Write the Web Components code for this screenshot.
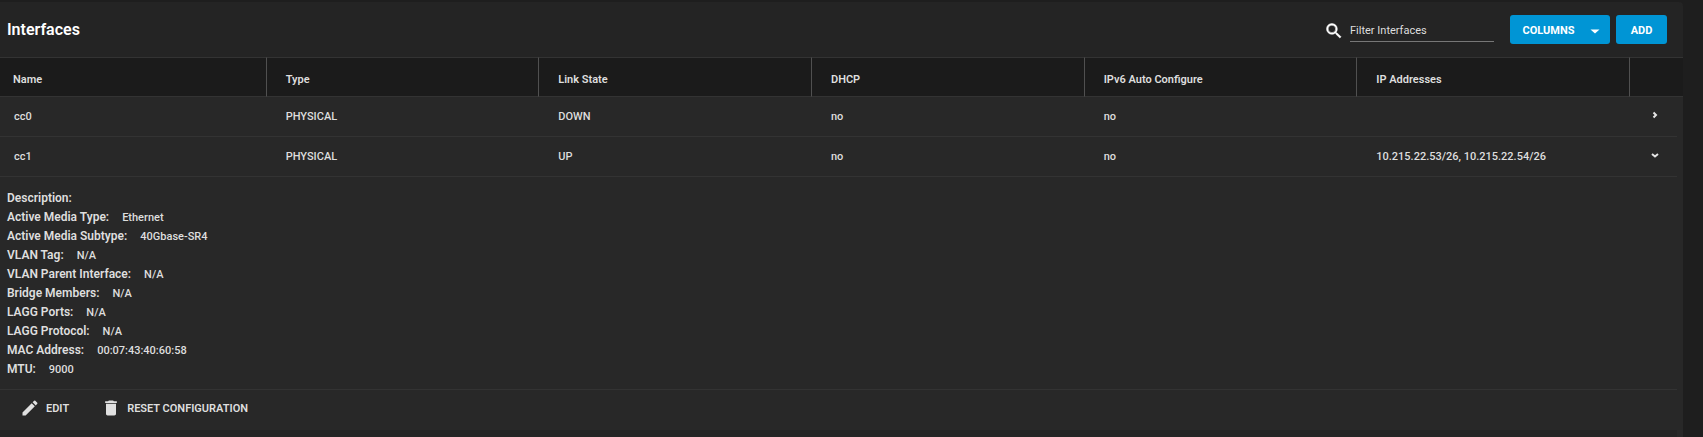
<!DOCTYPE html>
<html lang="en">
<head>
<meta charset="utf-8">
<title>Interfaces</title>
<style>
  html { background: #1e1e1e; }
  body {
    margin: 0;
    padding: 2px 20px 0 0;
    min-height: 100vh;
    box-sizing: border-box;
    display: flex;
    font-family: Roboto, "Liberation Sans", sans-serif;
    font-size: 11px;
    color: #dedede;
    --accent: #0095d5;
    --line: #333333;
    --row: #282828;
    --panel: #242424;
  }
</style>
</head>
<body>
<entity-card heading="Interfaces">
  <filter-box slot="tools"></filter-box>
  <accent-button slot="tools" menu>COLUMNS</accent-button>
  <accent-button slot="tools">ADD</accent-button>
  <interface-table></interface-table>
</entity-card>

<script>
const define = (name, html, setup) => {
  const template = document.createElement('template');
  template.innerHTML = html;
  customElements.define(name, class extends HTMLElement {
    constructor() {
      super();
      this.attachShadow({ mode: 'open' }).append(template.content.cloneNode(true));
    }
    connectedCallback() {
      if (setup && !this.ready) { this.ready = true; setup(this, this.shadowRoot); }
    }
  });
};

define('entity-card', `
  <style>
    :host { display: block; flex: 1; min-width: 0; background: var(--panel); border-radius: 0 4px 0 0; overflow: hidden; }
    header { display: flex; align-items: center; gap: 6px; height: 55px; padding: 0 16px 0 7px; box-sizing: border-box; }
    h1 { flex: 1; margin: 0; font-size: 16px; line-height: 20px; font-weight: 600; color: #fff; }
  </style>
  <header><h1></h1><slot name="tools"></slot></header>
  <slot></slot>`,
  (el, root) => { root.querySelector('h1').textContent = el.getAttribute('heading'); });

define('filter-box', `
  <style>
    :host { display: block; margin-right: 10px; }
    label { display: flex; align-items: center; gap: 6px; padding-top: 3px; }
    svg { width: 20px; height: 20px; fill: #fff; }
    input { width: 144px; height: 22px; box-sizing: border-box; padding: 0; border: 0; border-bottom: 1px solid #777; background: none; color: #dedede; font: inherit; outline: 0; }
    input::placeholder { color: #dedede; opacity: 1; }
  </style>
  <label>
    <svg viewBox="0 0 24 24" aria-hidden="true"><path d="M15.5 14h-.79l-.28-.27A6.47 6.47 0 0 0 16 9.5 6.5 6.5 0 1 0 9.5 16c1.61 0 3.09-.59 4.23-1.57l.27.28v.79l5 4.99L20.49 19l-4.99-5zm-6 0a4.5 4.5 0 1 1 0-9 4.5 4.5 0 0 1 0 9z" stroke="#fff" stroke-width=".6"/></svg>
    <input type="text" placeholder="Filter Interfaces" aria-label="Filter Interfaces">
  </label>`);

define('accent-button', `
  <style>
    :host { display: block; }
    button { display: flex; align-items: center; justify-content: center; gap: 9px; height: 29px; min-width: 51px; padding: 2px 12px 0; border: 0; border-radius: 3px; background: var(--accent); color: #fff; font: inherit; font-weight: 700; }
    svg { display: none; width: 24px; height: 24px; margin-right: -10px; fill: #fff; }
    :host([menu]) svg { display: block; }
    :host([menu]) button { min-width: 100px; }
  </style>
  <button type="button"><slot></slot><svg viewBox="0 0 24 24" aria-hidden="true"><path d="M7.500 10.500l4.500 4 4.500-4z"/></svg></button>`);

define('detail-line', `
  <style>
    :host { display: flex; align-items: baseline; gap: 13px; height: 19px; line-height: 19px; }
    strong { font-size: 12px; font-weight: 600; }
  </style>
  <strong></strong><span><slot></slot></span>`,
  (el, root) => { root.querySelector('strong').textContent = el.getAttribute('label') + ':'; });

define('row-action', `
  <style>
    :host { display: block; }
    button { display: flex; align-items: center; gap: 6px; padding: 0; border: 0; background: none; color: inherit; font: inherit; font-weight: 600; }
    ::slotted(svg) { width: 20px; height: 20px; fill: #e0e0e0; }
  </style>
  <button type="button"><slot name="icon"></slot><slot></slot></button>`);

define('interface-details', `
  <style>
    :host { display: block; }
    .lines { padding: 12px 7px 10px; margin-right: 6px; border-bottom: 1px solid var(--line); }
    .actions { display: flex; align-items: center; gap: 32px; height: 40px; padding: 0 20px 4px; box-sizing: border-box; }
  </style>
  <div class="lines">
    <detail-line label="Description"></detail-line>
    <detail-line label="Active Media Type">Ethernet</detail-line>
    <detail-line label="Active Media Subtype">40Gbase-SR4</detail-line>
    <detail-line label="VLAN Tag">N/A</detail-line>
    <detail-line label="VLAN Parent Interface">N/A</detail-line>
    <detail-line label="Bridge Members">N/A</detail-line>
    <detail-line label="LAGG Ports">N/A</detail-line>
    <detail-line label="LAGG Protocol">N/A</detail-line>
    <detail-line label="MAC Address">00:07:43:40:60:58</detail-line>
    <detail-line label="MTU">9000</detail-line>
  </div>
  <div class="actions">
    <row-action><svg slot="icon" viewBox="0 0 24 24" aria-hidden="true"><path d="M3 17.25V21h3.75L17.81 9.94l-3.75-3.75L3 17.25zM20.71 7.04a1 1 0 0 0 0-1.41l-2.34-2.34a1 1 0 0 0-1.41 0l-1.83 1.83 3.75 3.75 1.83-1.83z"/></svg>EDIT</row-action>
    <row-action><svg slot="icon" viewBox="0 0 24 24" aria-hidden="true"><path d="M6 19c0 1.1.9 2 2 2h8c1.100 0 2-.9 2-2V7H6v12zM19 4h-3.500l-1-1h-5l-1 1H5v2h14V4z"/></svg>RESET CONFIGURATION</row-action>
  </div>`);

define('interface-table', `
  <style>
    :host { display: block; margin-left: -6px; }
    table { width: 100%; table-layout: fixed; border-collapse: separate; border-spacing: 0; }
    .toggle { width: 53px; }
    th, td { box-sizing: border-box; height: 40px; padding: 0 0 0 19px; text-align: left; font-weight: 500; }
    td { background: var(--row); border-bottom: 1px solid var(--line); }
    td:first-child { padding-left: 20px; }
    th { background: #1b1b1b; border: solid var(--line); border-width: 1px 0; padding-top: 4px; font-weight: 600; }
    th:not(:last-child) { border-right: 1px solid #505050; }
    td.open { border-bottom: 0; padding: 0; background: linear-gradient(var(--line), var(--line)) left bottom / calc(100% - 6px) 1px no-repeat var(--row); }
    td.details { height: auto; padding: 0 0 0 6px; border: 0; font-weight: 500; }
    td.end { height: 7px; padding: 0; border: 0; border-right: 6px solid var(--row); background: var(--panel); }
    button { display: block; margin: 0 0 4px 18px; padding: 0; width: 14px; height: 14px; border: 0; background: none; }
    svg { display: block; width: 14px; height: 14px; fill: none; stroke: #e6e6e6; stroke-width: 2; }
  </style>
  <table>
    <thead><tr>
      <th>Name</th><th>Type</th><th>Link State</th><th>DHCP</th><th>IPv6 Auto Configure</th><th>IP Addresses</th><th class="toggle"></th>
    </tr></thead>
    <tbody>
      <tr><td>cc0</td><td>PHYSICAL</td><td>DOWN</td><td>no</td><td>no</td><td></td>
        <td class="open"><button type="button" aria-label="Expand cc0" aria-expanded="false"><svg viewBox="0 0 14 14"><path d="M5.500 4.500L8 7 5.500 9.500"/></svg></button></td></tr>
      <tr><td>cc1</td><td>PHYSICAL</td><td>UP</td><td>no</td><td>no</td><td>10.215.22.53/26, 10.215.22.54/26</td>
        <td class="open"><button type="button" aria-label="Collapse cc1" aria-expanded="true"><svg viewBox="0 0 14 14"><path d="M4 6L7 8.500 10 6"/></svg></button></td></tr>
      <tr><td class="details" colspan="7"><interface-details></interface-details></td></tr>
      <tr><td class="end" colspan="7"></td></tr>
    </tbody>
  </table>`);
</script>
</body>
</html>
